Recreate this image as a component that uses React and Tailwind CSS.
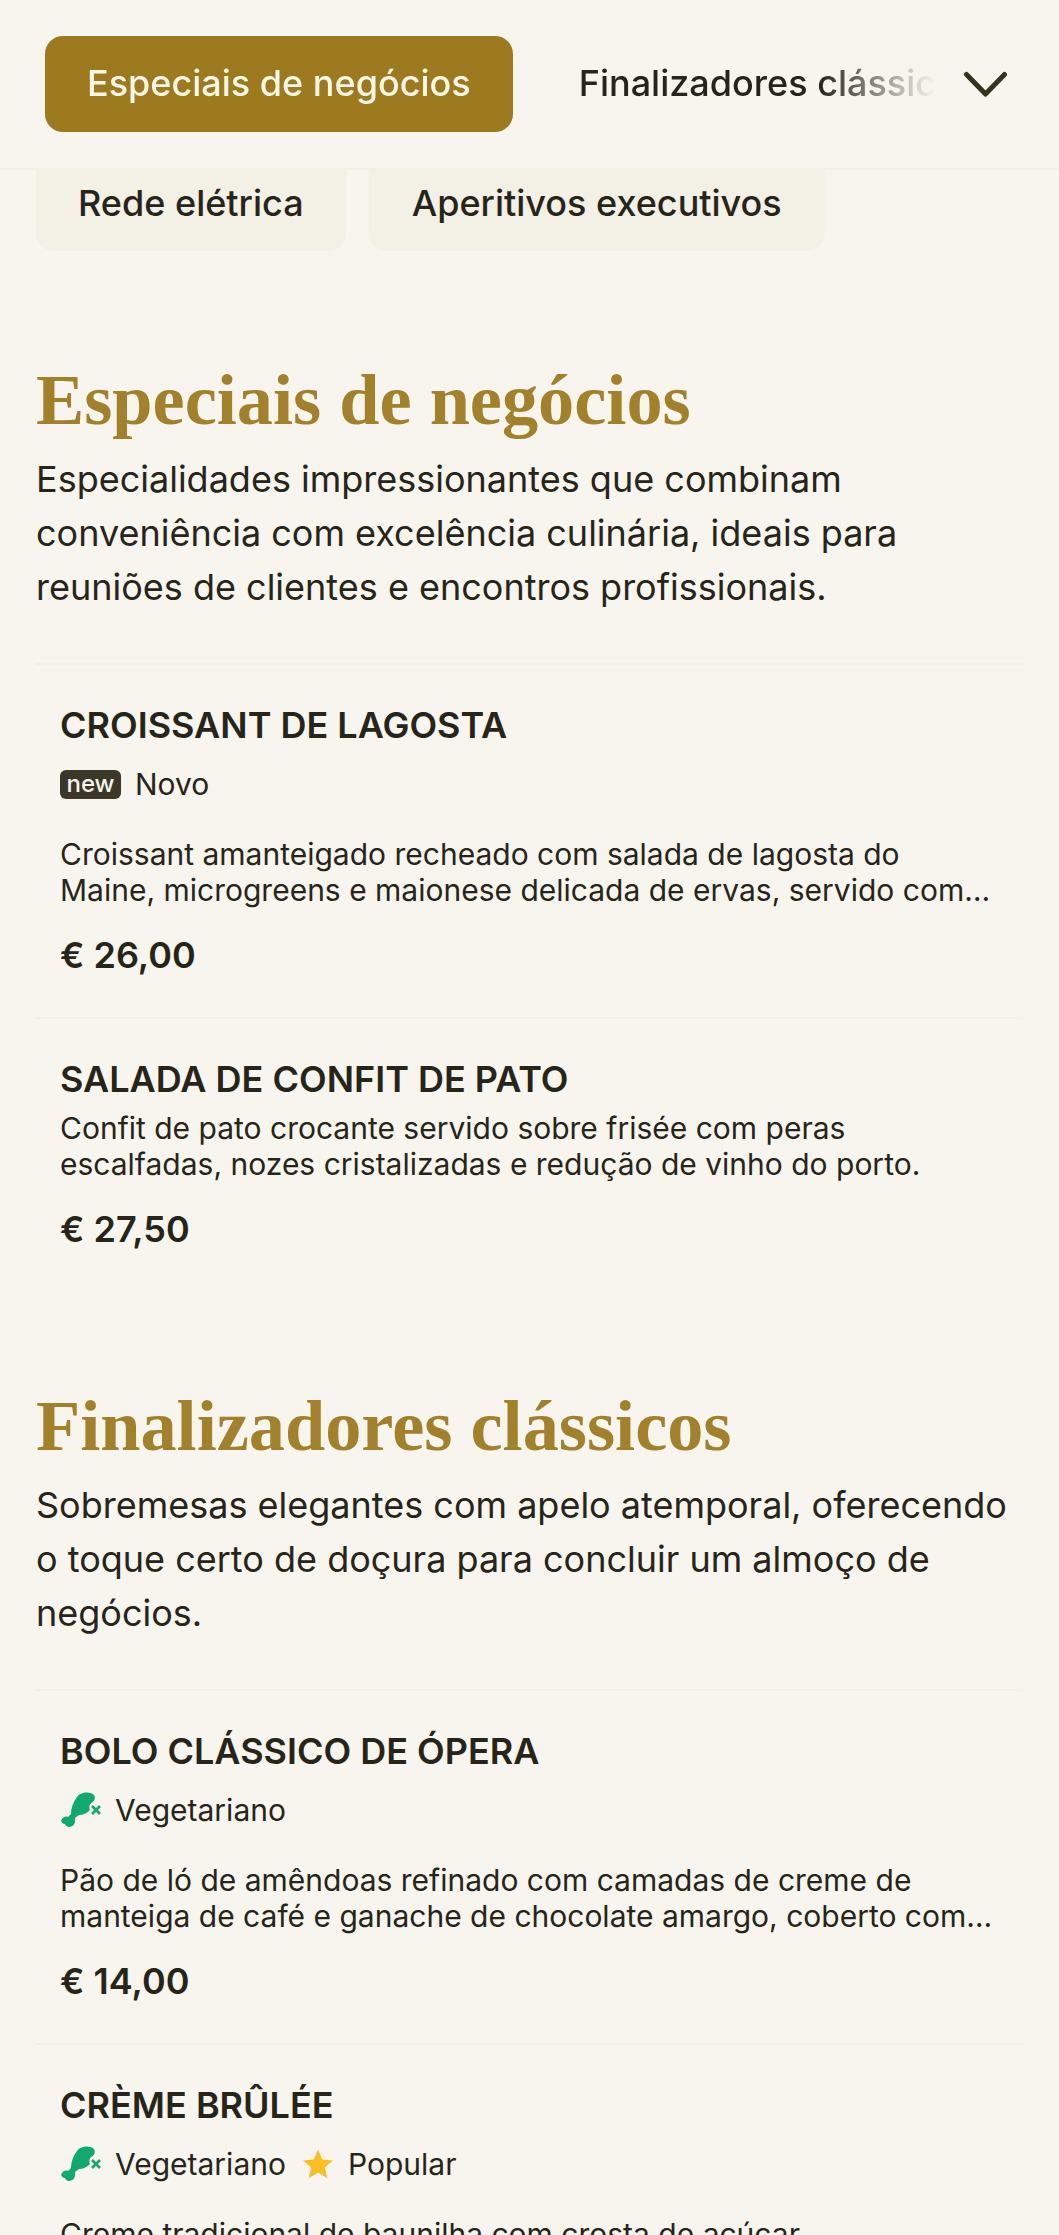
const ink = "text-[#27251a]";

function Drumstick() {
  return (
    <svg viewBox="0 0 41 36" className="w-[41px] h-[36px] shrink-0" aria-hidden="true">
      <path fill="#10a96f" d="M17 5C20 0 30-1 34 3C36 6 34 10 31 11C29 13 29 16 30 18C27 21 23 23 19 23L15 26C16 30 14 35 9 35C7 35 6 34 5 32C2 32 0 29 2 27C3 25 6 24 8 25L11 22C11 16 13 10 17 5Z" />
      <path d="M32 14L40 22M40 14L32 22" stroke="#10a96f" strokeWidth="2.600" fill="none" />
    </svg>
  );
}

function Star() {
  return (
    <svg viewBox="0 0 30 30" className="w-[30px] h-[30px] shrink-0" aria-hidden="true">
      <path fill="#fbbf24" d="M15 0.500L19.200 10.500L30 11.400L21.800 18.500L24.300 29.200L15 23.500L5.700 29.200L8.200 18.500L0 11.400L10.800 10.500Z" />
    </svg>
  );
}

function Item({ title, badges, desc, price }) {
  return (
    <div className="border-t-2 border-[#f2efe6] px-6">
      <h3 className={`text-[36px] leading-[45px] font-semibold ${ink} pt-[38px]`}>{title}</h3>
      {badges ? badges : <div className="h-[8px]" />}
      <p className={`text-[30px] leading-[36px] ${ink} line-clamp-2`}>{desc}</p>
      <p className={`text-[36px] leading-[54px] font-semibold ${ink} mt-[20px] pb-[35px]`}>{price}</p>
    </div>
  );
}

function Badges({ children }) {
  return <div className={`flex items-center h-[36px] mt-[18px] mb-[34px] text-[30px] ${ink}`}>{children}</div>;
}

function Section({ title, desc, children, className = "" }) {
  return (
    <section className={className}>
      <h2 className="text-[72.300px] leading-[90px] font-bold text-[#a2812a] font-['Liberation_Serif',serif]">{title}</h2>
      <p className={`text-[36px] leading-[54px] ${ink} mt-[7px] mb-[49px]`}>{desc}</p>
      {children}
    </section>
  );
}

export default function App() {
  return (
    <div className="w-[1059px] h-[2235px] overflow-hidden bg-[#f8f5ee] font-['Inter',sans-serif]">
      <header className="h-[170px] border-b-2 border-[#f2efe6] pl-[45px] pr-[51px] flex items-center">
        <div className="w-[890px] overflow-hidden flex items-center gap-6 [mask-image:linear-gradient(to_right,black_87%,transparent_100%)]">
          <button className="shrink-0 h-[96px] pb-[2px] px-[42px] rounded-[18px] bg-[#9c7a1d] text-[#fbf7e8] text-[36px] font-medium">Especiais de negócios</button>
          <button className={`shrink-0 h-[96px] pb-[2px] px-[42px] text-[36px] font-medium ${ink}`}>Finalizadores clássicos</button>
        </div>
        <svg viewBox="0 0 45 27" className="w-[45px] h-[27px] ml-auto" aria-hidden="true">
          <path d="M3.500 3.500L22.500 23L41.500 3.500" fill="none" stroke="#35321f" strokeWidth="5" strokeLinecap="round" strokeLinejoin="round" />
        </svg>
      </header>

      <div className="flex gap-[23px] px-9">
        <div className={`h-[81px] px-[42px] pt-[13px] rounded-b-[18px] bg-[#f3f0e6] text-[36px] leading-[40px] font-medium ${ink}`}>Rede elétrica</div>
        <div className={`h-[81px] px-[43px] pt-[13px] rounded-b-[18px] bg-[#f3f0e6] text-[36px] leading-[40px] font-medium ${ink}`}>Aperitivos executivos</div>
      </div>

      <main className="px-9">
        <Section
          className="pt-[104px]"
          title="Especiais de negócios"
          desc="Especialidades impressionantes que combinam conveniência com excelência culinária, ideais para reuniões de clientes e encontros profissionais."
        >
          <Item
            title="CROISSANT DE LAGOSTA"
            badges={
              <Badges>
                <span className="h-[29px] w-[61px] mr-[14px] flex items-center justify-center rounded-[6px] bg-[#3b3829] text-[#f8f5ee] text-[24px] font-medium leading-none">new</span>
                Novo
              </Badges>
            }
            desc="Croissant amanteigado recheado com salada de lagosta do Maine, microgreens e maionese delicada de ervas, servido com batatas crocantes da casa e limão."
            price="€ 26,00"
          />
          <Item
            title="SALADA DE CONFIT DE PATO"
            desc="Confit de pato crocante servido sobre frisée com peras escalfadas, nozes cristalizadas e redução de vinho do porto."
            price="€ 27,50"
          />
        </Section>

        <Section
          className="pt-[90px]"
          title="Finalizadores clássicos"
          desc="Sobremesas elegantes com apelo atemporal, oferecendo o toque certo de doçura para concluir um almoço de negócios."
        >
          <Item
            title="BOLO CLÁSSICO DE ÓPERA"
            badges={
              <Badges>
                <Drumstick />
                <span className="ml-[14px]">Vegetariano</span>
              </Badges>
            }
            desc="Pão de ló de amêndoas refinado com camadas de creme de manteiga de café e ganache de chocolate amargo, coberto com folhas de ouro comestível e frutas."
            price="€ 14,00"
          />
          <Item
            title="CRÈME BRÛLÉE"
            badges={
              <Badges>
                <Drumstick />
                <span className="ml-[14px]">Vegetariano</span>
                <span className="ml-[17px]"><Star /></span>
                <span className="ml-[15px]">Popular</span>
              </Badges>
            }
            desc="Creme tradicional de baunilha com crosta de açúcar caramelizado, servido com frutas vermelhas frescas e biscoito amanteigado da casa."
            price="€ 12,00"
          />
        </Section>
      </main>
    </div>
  );
}
